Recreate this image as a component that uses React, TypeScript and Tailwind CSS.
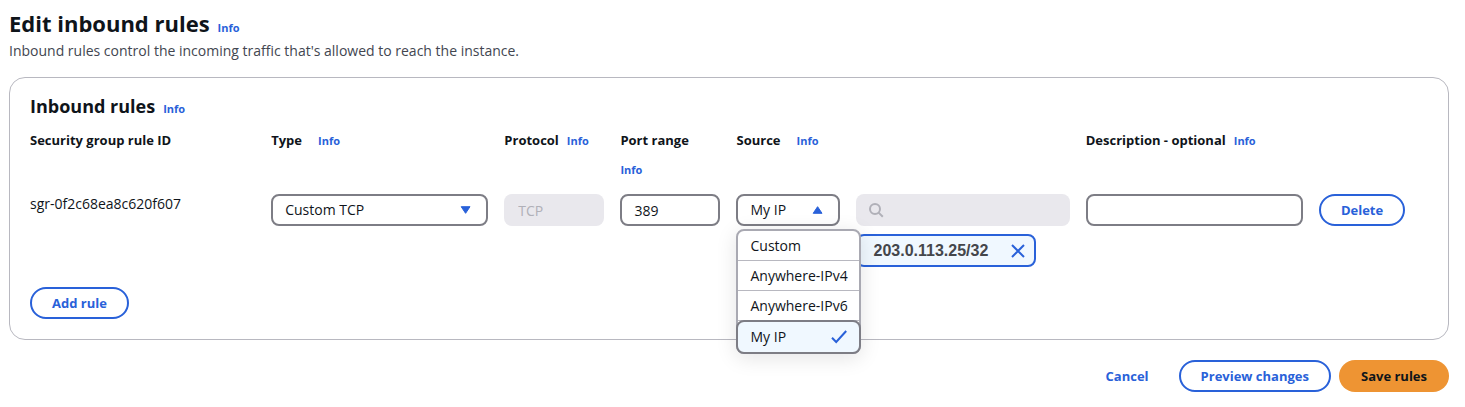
import { useState, type ReactNode } from "react";

const SOURCES = ["Custom", "Anywhere-IPv4", "Anywhere-IPv6", "My IP"];

const FIELD =
  "block h-8 w-full rounded-lg border-2 border-[#7d7d85] bg-white px-3 text-[14px] leading-5 text-[#0f141a] outline-none";
const PILL =
  "flex h-8 items-center rounded-full border-2 border-[#2961d9] bg-white px-5 text-[13px] leading-5 font-bold text-[#2961d9]";

function Info() {
  return (
    <a href="#info" className="text-[11px] leading-4 font-bold text-[#2961d9]">
      Info
    </a>
  );
}

function Heading({ id, text, wide = false }: { id: string; text: string; wide?: boolean }) {
  return (
    <div className={`flex flex-wrap items-baseline gap-y-3 ${wide ? "gap-x-4" : "gap-x-2"}`}>
      <label htmlFor={id} className="text-[13px] leading-5 font-bold whitespace-nowrap">
        {text}
      </label>
      <Info />
    </div>
  );
}

function Caret({ up = false }: { up?: boolean }) {
  return (
    <svg
      viewBox="0 0 12 8"
      className="pointer-events-none absolute top-3 right-4 h-2 w-3 fill-[#2961d9] stroke-[#2961d9]"
      strokeLinejoin="round"
      aria-hidden="true"
    >
      <path d={up ? "M1.2 7.3h8.8L5.6 .7z" : "M1.2.7h8.8L5.6 7.3z"} />
    </svg>
  );
}

function SelectBox({ children }: { children: ReactNode }) {
  return <div className="relative">{children}</div>;
}

export default function App() {
  const [open, setOpen] = useState(true);
  const [source, setSource] = useState("My IP");
  const [port, setPort] = useState("389");
  const [description, setDescription] = useState("");
  const [hasAddress, setHasAddress] = useState(true);

  return (
    <main className="bg-white pt-2 pr-4 pb-4 pl-[9px] font-['Open_Sans',sans-serif] text-[#0f141a]">
      <header>
        <div className="flex items-baseline gap-2">
          <h1 className="text-[22px] leading-[30px] font-bold">Edit inbound rules</h1>
          <Info />
        </div>
        <p className="mt-[3px] text-[14px] leading-5 text-[#424650]">
          Inbound rules control the incoming traffic that's allowed to reach the instance.
        </p>
      </header>

      <section className="mt-4 rounded-2xl border border-[#b8b8c0] px-5 pt-4 pb-5">
        <div className="flex items-baseline gap-2">
          <h2 className="text-[18px] leading-6 font-bold">Inbound rules</h2>
          <Info />
        </div>

        <div className="mt-3 grid grid-cols-[225fr_217fr_100fr_100fr_333fr_217fr_109fr] gap-x-4 gap-y-4">
          <div className="text-[13px] leading-5 font-bold">Security group rule ID</div>
          <Heading id="type" text="Type" wide />
          <Heading id="protocol" text="Protocol" />
          <Heading id="port" text="Port range" wide />
          <Heading id="source" text="Source" wide />
          <Heading id="description" text="Description - optional" />
          <div />

          <div className="text-[14px] leading-5">sgr-0f2c68ea8c620f607</div>
          <SelectBox>
            <select id="type" className={`${FIELD} appearance-none`} defaultValue="Custom TCP">
              <option>Custom TCP</option>
              <option>Custom UDP</option>
              <option>All traffic</option>
            </select>
            <Caret />
          </SelectBox>
          <input
            id="protocol"
            disabled
            value="TCP"
            className="block h-8 w-full rounded-lg bg-[#e9e8ed] px-[14px] text-[14px] leading-5 text-[#b0b0b8]"
          />
          <input id="port" className={FIELD} value={port} onChange={(e) => setPort(e.target.value)} />

          <div className="grid grid-cols-[103fr_214fr] items-start gap-x-4 gap-y-2">
            <div className="relative">
              <select
                id="source"
                className={`${FIELD} appearance-none`}
                value={source}
                onMouseDown={(e) => {
                  e.preventDefault();
                  setOpen(!open);
                }}
                onChange={(e) => setSource(e.target.value)}
              >
                {SOURCES.map((name) => (
                  <option key={name}>{name}</option>
                ))}
              </select>
              <Caret up={open} />
              {open && (
                <ul
                  role="listbox"
                  aria-label="Source"
                  className="absolute top-full left-0 z-10 mt-[3px] w-[125px] rounded-lg border-2 border-[#a9a9b2] bg-white text-[14px] leading-5 shadow-[0_4px_20px_1px_rgba(0,7,22,0.1)]"
                >
                  {SOURCES.map((name) => (
                    <li
                      key={name}
                      role="option"
                      aria-selected={name === source}
                      onClick={() => {
                        setSource(name);
                        setOpen(false);
                      }}
                      className={
                        name === source
                          ? "-mx-[2px] -mt-px -mb-[2px] flex h-[34px] items-center justify-between rounded-lg border-2 border-[#7d7d85] bg-[#f0f8ff] px-3"
                          : "flex h-[30px] items-center border-b border-[#b8b8c0] px-3 whitespace-nowrap"
                      }
                    >
                      {name}
                      {name === source && (
                        <svg viewBox="0 0 16 14" className="h-[14px] w-4" fill="none" stroke="#2961d9" strokeWidth="2" aria-hidden="true">
                          <path d="M1 7.7 5.2 12 15.2 1" />
                        </svg>
                      )}
                    </li>
                  ))}
                </ul>
              )}
            </div>
            <div className="relative">
              <input
                type="search"
                aria-label="Source address"
                disabled
                className="block h-8 w-full rounded-lg bg-[#e9e8ed] pr-3 pl-9 text-[14px]"
              />
              <svg viewBox="0 0 16 16" className="absolute top-2 left-3 size-4" fill="none" stroke="#b0b0b8" strokeWidth="2" aria-hidden="true">
                <circle cx="7" cy="7" r="5" />
                <path d="m10.6 10.6 4.2 4.2" />
              </svg>
            </div>
            {hasAddress && (
              <div className="col-start-2 flex h-[33px] items-center justify-between gap-5 justify-self-start rounded-lg border-2 border-[#2961d9] bg-[#f0f8ff] pr-[6px] pl-4 font-['Liberation_Sans',sans-serif] text-[16px] leading-5 font-bold text-[#44464b]">
                203.0.113.25/32
                <button type="button" aria-label="Remove address" onClick={() => setHasAddress(false)} className="grid size-5 place-items-center">
                  <svg viewBox="0 0 14 14" className="size-[14px]" fill="none" stroke="#2961d9" strokeWidth="2" aria-hidden="true">
                    <path d="m1 1 12 12M13 1 1 13" />
                  </svg>
                </button>
              </div>
            )}
          </div>

          <input
            id="description"
            className={FIELD}
            value={description}
            onChange={(e) => setDescription(e.target.value)}
          />
          <div>
            <button type="button" className={PILL}>
              Delete
            </button>
          </div>
        </div>

        <button type="button" className={`${PILL} mt-5`}>
          Add rule
        </button>
      </section>

      <footer className="mt-5 flex justify-end gap-2">
        <button type="button" className="h-8 px-[22px] text-[13px] leading-5 font-bold text-[#2961d9]">
          Cancel
        </button>
        <button type="button" className={PILL}>
          Preview changes
        </button>
        <button type="button" className="h-8 rounded-full bg-[#ee9433] px-[22px] text-[13px] leading-5 font-bold">
          Save rules
        </button>
      </footer>
    </main>
  );
}
